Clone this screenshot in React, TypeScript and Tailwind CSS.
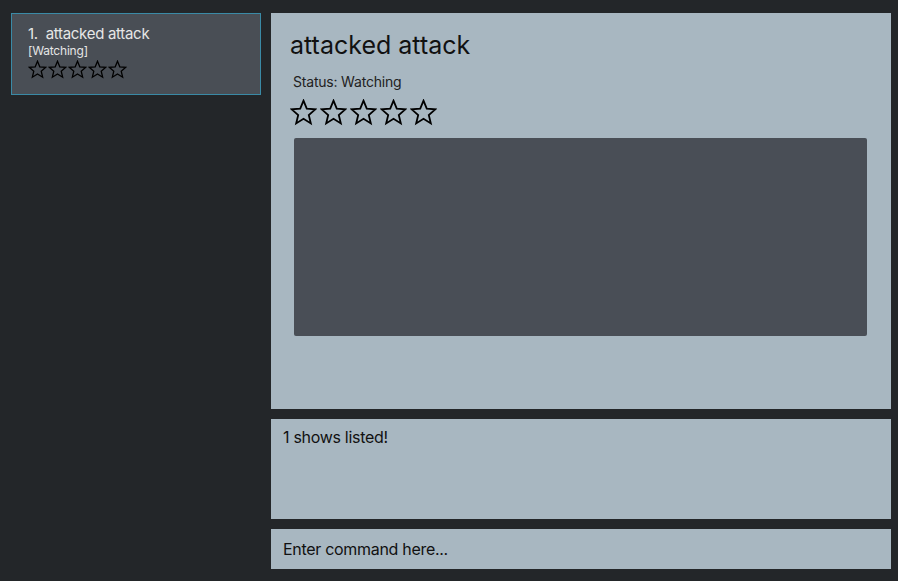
import React from 'react'

const Star = ({ size }: { size: number }) => (
  <svg width={size} height={size} viewBox="0 0 24 24" fill="none" stroke="#000" strokeWidth={1.6} strokeLinejoin="miter">
    <polygon points="12,1.5 14.9,8.6 22.5,9.2 16.7,14.2 18.5,21.7 12,17.6 5.5,21.7 7.3,14.2 1.5,9.2 9.1,8.6" />
  </svg>
)

const Stars = ({ size, gap }: { size: number; gap: string }) => (
  <div className={`flex ${gap}`}>
    {[0, 1, 2, 3, 4].map((i) => (
      <Star key={i} size={size} />
    ))}
  </div>
)

export default function App() {
  return (
    <div
      className="w-[898px] h-[581px] bg-[#232629] flex overflow-hidden"
      style={{ fontFamily: 'Inter, "Open Sans", sans-serif' }}
    >
      {/* show list */}
      <div className="w-[265px] pl-[11px] pr-[4px] pt-[13px]">
        <div className="bg-[#494e55] border border-[#3a8aa6] h-[82px] pl-[16px] pt-[10px]">
          <div className="text-[15px] leading-[20px] text-[#e6e6e6] tracking-[-0.3px]">
            1.&nbsp; attacked attack
          </div>
          <div className="text-[12px] leading-[14px] text-[#e6e6e6] tracking-[-0.2px]">[Watching]</div>
          <div className="mt-[2px]">
            <Stars size={19} gap="gap-[1px]" />
          </div>
        </div>
      </div>

      {/* right side */}
      <div className="flex-1 flex flex-col pl-[6px] pr-[7px] pt-[13px] pb-[12px] gap-[10px]">
        <div className="h-[396px] bg-[#a8b7c1] pl-[19px] pr-[24px] pt-[16px]">
          <div className="text-[25px] leading-[32px] text-[#111]">attacked attack</div>
          <div className="text-[14px] leading-[18px] text-[#222] mt-[12px] ml-[3px] tracking-[-0.2px]">
            Status: Watching
          </div>
          <div className="mt-[8px]">
            <Stars size={27} gap="gap-[3px]" />
          </div>
          <div className="ml-[4px] mt-[12px] h-[198px] bg-[#494e56] rounded-[2px]" />
        </div>
        <div className="h-[100px] bg-[#a8b7c1] px-[12px] pt-[6px] text-[16px] text-[#111] tracking-[-0.3px]">
          1 shows listed!
        </div>
        <div className="h-[40px] bg-[#a8b7c1] px-[12px] flex items-center text-[16px] text-[#111] tracking-[-0.3px]">
          Enter command here...
        </div>
      </div>
    </div>
  )
}
